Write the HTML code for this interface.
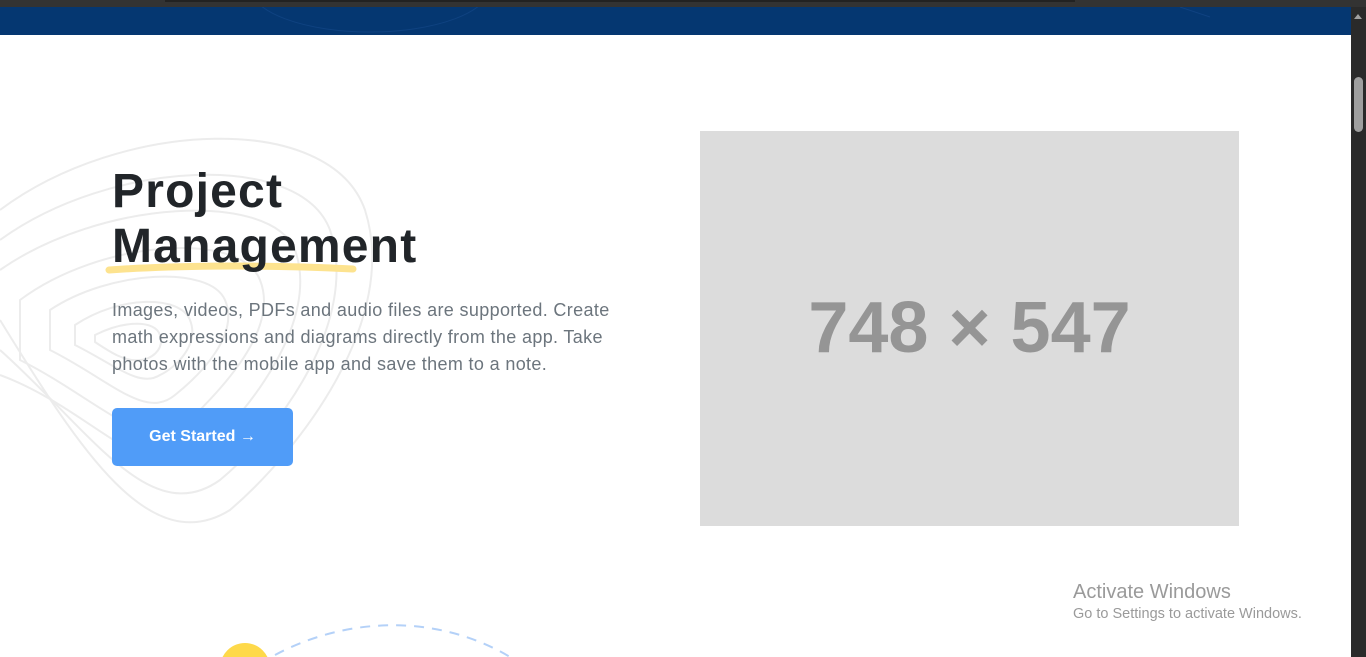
<!DOCTYPE html>
<html style="overflow:hidden"><head><style>
*{margin:0;padding:0;box-sizing:border-box}
body{width:1366px;height:657px;overflow:hidden;background:#fff;font-family:"Liberation Sans",sans-serif;position:relative}
.top{position:absolute;left:0;top:0;width:1366px;height:7px;background:#333}
.top2{position:absolute;left:165px;top:0;width:910px;height:2px;background:#222}
.nav{position:absolute;left:0;top:7px;width:1351px;height:28px;background:#053771;overflow:hidden}
.sb{position:absolute;right:0;top:7px;width:15px;height:650px;background:#2a2a2a}
.thumb{position:absolute;left:3px;top:70px;width:9px;height:55px;border-radius:5px;background:#9f9f9f}
.arr{position:absolute;left:3px;top:7px;width:0;height:0;border-left:4.5px solid transparent;border-right:4.5px solid transparent;border-bottom:5px solid #a0a0a0}
h1{position:absolute;left:112px;top:164px;font-size:48px;line-height:55px;font-weight:bold;color:#212529;letter-spacing:1.2px}
p{position:absolute;left:112px;top:297px;width:540px;font-size:18px;line-height:27px;color:#6c757d;letter-spacing:0.35px}
.btn{position:absolute;left:112px;top:408px;width:181px;height:58px;background:#509cf8;border-radius:5px;color:#fff;font-size:16px;font-weight:bold;text-align:center;line-height:58px}
.ph{position:absolute;left:700px;top:131px;width:539px;height:395px;background:#dcdcdc;color:#959595;font-size:72px;font-weight:bold;text-align:center;line-height:395px}
.wm{position:absolute;left:1073px;top:581px;color:#9a9a9a;font-size:20px}
.wm2{position:absolute;left:1073px;top:606px;color:#9a9a9a;font-size:14.5px}
</style></head><body>
<svg style="position:absolute;left:0;top:120px" width="400" height="420">
<g fill="none" stroke="#ececec" stroke-width="2">
<path d="M0 90 C120 0 330 -10 365 90 C400 200 300 330 230 390 C150 440 80 330 0 200"/>
<path d="M0 120 C110 40 300 30 330 110 C360 200 280 310 220 360 C150 410 90 310 0 230"/>
<path d="M0 150 C100 80 270 70 295 130 C320 200 250 290 205 330 C150 375 95 290 0 255"/>
<path d="M20 180 C100 120 240 110 260 160 C280 210 220 270 190 300 C150 340 100 280 20 240Z"/>
<path d="M50 190 C110 150 210 145 225 180 C240 215 200 255 175 275 C145 300 110 260 50 230Z"/>
<path d="M75 205 C120 175 180 175 190 200 C200 225 175 248 160 255 C140 268 115 245 75 225Z"/>
<path d="M95 215 C125 200 155 200 160 215 C165 230 150 240 140 240 C125 242 110 232 95 222Z"/>
</g></svg>
<div class="top"></div><div class="top2"></div>
<div class="nav"><svg width="1351" height="28"><g fill="none" stroke="#0f4280" stroke-width="1"><ellipse cx="370" cy="-20" rx="120" ry="45"/><path d="M1180 0 L1210 10"/></g></svg></div>
<div class="sb"><div class="arr"></div><div class="thumb"></div></div>
<svg style="position:absolute;left:105px;top:260px" width="260" height="20"><path d="M4 10 C60 6 150 4 248 9" stroke="#fde38f" stroke-width="7" fill="none" stroke-linecap="round"/></svg>
<h1>Project<br>Management</h1>
<p>Images, videos, PDFs and audio files are supported. Create math expressions and diagrams directly from the app. Take photos with the mobile app and save them to a note.</p>
<div class="btn">Get Started →</div>
<div class="ph">748 × 547</div>
<div class="wm">Activate Windows</div>
<div class="wm2">Go to Settings to activate Windows.</div>
<svg style="position:absolute;left:200px;top:620px" width="340" height="37">
<circle cx="45" cy="48" r="25" fill="#fed94a"/>
<path d="M75 35 C150 -5 240 -5 310 37" fill="none" stroke="#b4d1f8" stroke-width="2" stroke-dasharray="10 8"/>
</svg>
</body></html>
